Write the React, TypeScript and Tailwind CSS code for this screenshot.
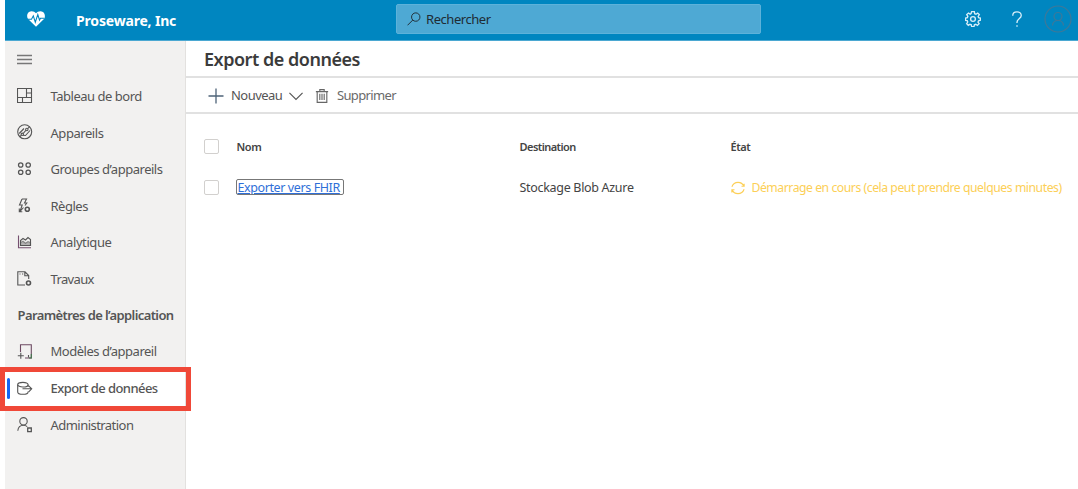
import type { ReactNode } from "react";

function Icon({ children, className = "h-4 w-4" }: { children: ReactNode; className?: string }) {
  return (
    <svg viewBox="0 0 16 16" className={`shrink-0 ${className}`} fill="none" stroke="currentColor" strokeWidth="1.1">
      {children}
    </svg>
  );
}

const icons = {
  dashboard: (
    <Icon>
      <path d="M.5.5h14v14H.5zM9.500.5v9M.5 9.500h14M9.500 5h5M5.500 9.500v5" />
    </Icon>
  ),
  devices: (
    <Icon>
      <circle cx="7.700" cy="7.800" r="7" />
      <path d="M4.500 11 2.800 12.800M6.200 9.500l2.600-3.200M10.600 4.700l2.200-2M6 11.200l2.500.3 4.500-5" />
      <circle cx="5.300" cy="10.300" r="1.200" />
      <circle cx="9.800" cy="5.500" r="1.200" />
      <path d="M2.200 9.500 7 4.500" />
    </Icon>
  ),
  groups: (
    <Icon>
      <circle cx="3.700" cy="4" r="2.200" strokeWidth="1.250" />
      <circle cx="11.200" cy="4" r="2.200" strokeWidth="1.250" />
      <circle cx="3.700" cy="11.200" r="2.200" strokeWidth="1.250" />
      <circle cx="11.200" cy="11.200" r="2.200" strokeWidth="1.250" />
    </Icon>
  ),
  rules: (
    <Icon>
      <path d="M5 1h4.500L7.500 5h2.300L8 7.500M5 1 2.500 7h2.700L3 13.500 6.500 9.500M2.300 10.500v3.300h3" />
      <circle cx="10.300" cy="11.300" r="2" strokeWidth="1.600" />
    </Icon>
  ),
  analytics: (
    <Icon>
      <path d="M1.500 1.500v12.200H14" stroke="#75506f" />
      <path d="M3.500 11.500V6.500L6 4.500l2.500 1.500L11 3.500l2.500 2v6z" />
      <path d="M3.500 11.500V8.500L6 7.200l2.500 2 2.500-1.700 2.500 1v3z" fill="currentColor" fillOpacity=".4" strokeOpacity=".6" />
    </Icon>
  ),
  jobs: (
    <Icon>
      <path d="M8 14H.8V.8H8l3.700 3.700v3.500M7.800.8v4h4M2.500 3h1M5 3h1.200" />
      <circle cx="11.500" cy="12" r="2" strokeWidth="1.600" />
    </Icon>
  ),
  templates: (
    <Icon>
      <path d="M3.500 8V.8h10.800V14H8" stroke="#6d4a62" />
      <path d="M.8 11.700h6M3.800 8.700v6M11.500 13.500v-2.500" />
      <path d="M14.300 10v4H12" stroke="#40764c" />
    </Icon>
  ),
  exporting: (
    <Icon>
      <ellipse cx="5.900" cy="3.700" rx="5.200" ry="2.300" />
      <path d="M.7 3.700v7.300c0 1.200 2.300 2.300 5.200 2.300s5.200-1.100 5.200-2.300v-.5M11.100 3.700v2M5.500 7.800h9.200M11.700 4.800l3 3-3 3" />
    </Icon>
  ),
  admin: (
    <Icon>
      <circle cx="6.500" cy="4.300" r="3.700" />
      <path d="M.8 13.800c.3-3.300 2.500-5.600 5.700-5.600 1.600 0 2.700.5 3.700 1.500" />
      <path d="M10.700 11h3.600v3.600h-3.600z" strokeWidth="1.300" />
    </Icon>
  ),
};

function NavItem({ icon, text, className = "pt-[1.500px] tracking-[-0.480px]" }: { icon: ReactNode; text: string; className?: string }) {
  return (
    <a className="flex h-[36.6px] shrink-0 items-center gap-[17.500px] pl-[12px]">
      {icon}
      <span className={`whitespace-nowrap ${className}`}>{text}</span>
    </a>
  );
}

function Checkbox() {
  return <span className="block h-[15px] w-[15px] rounded-[2px] border border-[#d2d0ce] bg-white" />;
}

export default function App() {
  return (
    <div className="relative h-[489px] w-[1078px] overflow-hidden bg-white pl-[5px] font-['Noto_Sans',sans-serif] text-[13px] text-[#555]">
      <header className="flex h-[41px] items-center border-b border-[#4ba8d2] bg-[#0086c0] text-white">
        <svg viewBox="0 0 18 16" className="-mt-[3px] ml-[22px] h-4 w-[18px] shrink-0" fill="none">
          <path d="M9 15.800 1.300 8.300C-.6 6.200-.1 2.500 2 1c2.300-1.600 5.500-.8 7 1.300C10.500.2 13.700-.6 16 1c2.100 1.500 2.600 5.200.7 7.300z" fill="#fff" />
          <path d="M1 8.200h3.500L6.300 4.800l2 6.400 2.500-7.700 1.700 5.500 1-1.800H17" stroke="#0086c0" strokeWidth="1.100" />
        </svg>
        <span className="ml-[31px] w-[320px] shrink-0 whitespace-nowrap text-[14px] font-bold tracking-[-0.180px]">Proseware, Inc</span>
        <div className="mt-[-2px] flex h-[30px] w-[365px] shrink-0 items-center rounded-[2px] border border-[#5db2da] bg-[#4ea9d4] pl-[10px] text-[#202c34]">
          <Icon className="h-[14px] w-[14px]">
            <circle cx="10" cy="5.800" r="4.800" />
            <path d="m6.600 9.200-6 6" />
          </Icon>
          <span className="ml-[5px] pt-[2px] tracking-[-0.450px]">Rechercher</span>
        </div>
        <svg viewBox="0 0 24 24" className="-mt-[2px] ml-[204px] h-[16px] w-[16px] shrink-0" fill="none" stroke="#d7eef8" strokeWidth="2">
          <path d="m9.500 2 .5-1h4l.5 3 2 .8L19 3l2.500 2.500-1.800 2.700.8 1.800 2.500.5v3.500l-2.700.6-.8 2 1.700 2.400-2.600 2.600-2.500-1.700-2 .8-.6 2.800h-3.500l-.6-2.800-2-.8L5 21.500 2.500 19l1.600-2.500-.8-2L.8 14v-3.500l2.700-.6.8-2L2.600 5.400 5.200 3l2.500 1.700 1.500-.7z" />
          <circle cx="12" cy="12" r="3.600" />
        </svg>
        <svg viewBox="0 0 12 18" className="-mt-[2px] ml-[30px] h-[17px] w-[12px] shrink-0" fill="none" stroke="#d7eef8" strokeWidth="1.400">
          <path d="M1.500 5C1.500 2.300 3.500 1 6 1s4.500 1.400 4.500 3.800c0 3.300-4.500 3.700-4.500 7v1M6 15v1.700" />
        </svg>
        <svg viewBox="0 0 28 28" className="-mt-[3px] ml-[21px] h-[28px] w-[28px] shrink-0" fill="none" stroke="#3e7898" strokeWidth="1.200">
          <circle cx="14" cy="14" r="13" />
          <circle cx="14" cy="11.500" r="4" />
          <path d="M8.500 20.500c.3-3.200 2.500-5 5.500-5s5.200 1.800 5.500 5" />
        </svg>
      </header>

      <div className="flex h-[448px]">
        <nav className="flex w-[181px] shrink-0 flex-col border-r border-[#e3e1df] bg-[#f2f1f0]">
          <div className="flex h-[36.6px] shrink-0 items-center pl-[12px] text-[#777]">
            <Icon>
              <path d="M0 4.500h15M0 8.500h15M0 12.500h15" strokeWidth="1.300" />
            </Icon>
          </div>
          <NavItem icon={icons.dashboard} text="Tableau de bord" />
          <NavItem icon={icons.devices} text="Appareils" className="pt-[3px] tracking-[-0.450px]" />
          <NavItem icon={icons.groups} text="Groupes d’appareils" />
          <NavItem icon={icons.rules} text="Règles" />
          <NavItem icon={icons.analytics} text="Analytique" className="pt-[1.500px] tracking-[-0.400px]" />
          <NavItem icon={icons.jobs} text="Travaux" className="pt-[1.500px] tracking-[-0.650px]" />
          <h2 className="flex h-[36.6px] shrink-0 items-center whitespace-nowrap pl-[12.500px] pt-px font-semibold tracking-[-0.600px]">Paramètres de l’application</h2>
          <NavItem icon={icons.templates} text="Modèles d’appareil" className="tracking-[-0.480px]" />
          <div className="relative shrink-0 bg-white">
            <NavItem icon={icons.exporting} text="Export de données" className="font-medium tracking-[-0.560px]" />
            <span className="absolute left-[2px] top-[8px] h-[21px] w-[3px] rounded-full bg-[#1464f4]" />
            <span className="absolute -left-[5px] top-[-3px] h-[44px] w-[191px] border-[5px] border-[#f04838]" />
          </div>
          <NavItem icon={icons.admin} text="Administration" className="pt-[1.500px] tracking-[-0.540px]" />
        </nav>

        <main className="min-w-0 flex-1">
          <h1 className="flex h-[37px] items-center border-b-2 border-[#e1e1e1] pl-[18px] pt-[2px] text-[18px] font-semibold text-[#3b3b3b]">
            <span className="tracking-[-0.480px]">Export de données</span>
          </h1>
          <div className="flex h-[36px] items-center border-b-2 border-[#e1e1e1] pl-[22px] pt-[2px]">
            <Icon className="h-[16px] w-[16px] text-[#4d6378]">
              <path d="M8 .5v15M.5 8h15" strokeWidth="1.300" />
            </Icon>
            <span className="ml-[7px] w-[58px] tracking-[-0.550px]">Nouveau</span>
            <Icon className="h-[14px] w-[14px]">
              <path d="m.5 4.500 7.500 7.500 7.500-7.500" strokeWidth="1.300" />
            </Icon>
            <Icon className="ml-[12px] h-[16px] w-[14px] text-[#666]">
              <path d="M1 3h14M5.500 3V.7h5V3M2.500 3v12.300h11V3M5.500 5.500v7M8 5.500v7M10.500 5.500v7" strokeWidth="1.300" />
            </Icon>
            <span className="ml-[8px] tracking-[-0.650px] text-[#6a6a6a]">Supprimer</span>
          </div>
          <div className="grid grid-cols-[33px_283px_211px_1fr] items-center pl-[17.500px] pt-[12px] text-[#444]">
            <div className="flex h-[41px] items-center"><Checkbox /></div>
            <b className="pt-[2px] text-[11px] font-semibold tracking-[-0.400px]">Nom</b>
            <b className="pt-[2px] text-[11px] font-semibold tracking-[-0.550px]">Destination</b>
            <b className="pt-[2px] text-[11px] font-semibold tracking-[-0.400px]">État</b>
            <div className="flex h-[40px] items-center"><Checkbox /></div>
            <div className="flex">
              <a className="flex h-[14px] w-[106px] items-center whitespace-nowrap rounded-[1px] pl-px pt-[2px] text-[12.500px] tracking-[-0.400px] text-[#2f6fd8] underline outline-1 outline-[#777]">Exporter vers FHIR</a>
            </div>
            <span className="whitespace-nowrap pt-[2px] text-[12.500px] tracking-[-0.310px]">Stockage Blob Azure</span>
            <span className="flex items-center whitespace-nowrap pt-[2px] text-[12.200px] text-[#fccf56]">
              <Icon className="h-[14px] w-[14px]">
                <path d="M1 6.500C2.500 2.500 5 1.500 8 1.500c3 0 5.500 1.500 6.700 4.500M15 3v3h-3M15 9.500c-1.500 4-4 5-7 5-3 0-5.500-1.500-6.700-4.500M1 13v-3h3" strokeWidth="1.300" />
              </Icon>
              <span className="ml-[7px] tracking-[-0.450px]">Démarrage en cours (cela peut prendre quelques minutes)</span>
            </span>
          </div>
        </main>
      </div>
    </div>
  );
}
